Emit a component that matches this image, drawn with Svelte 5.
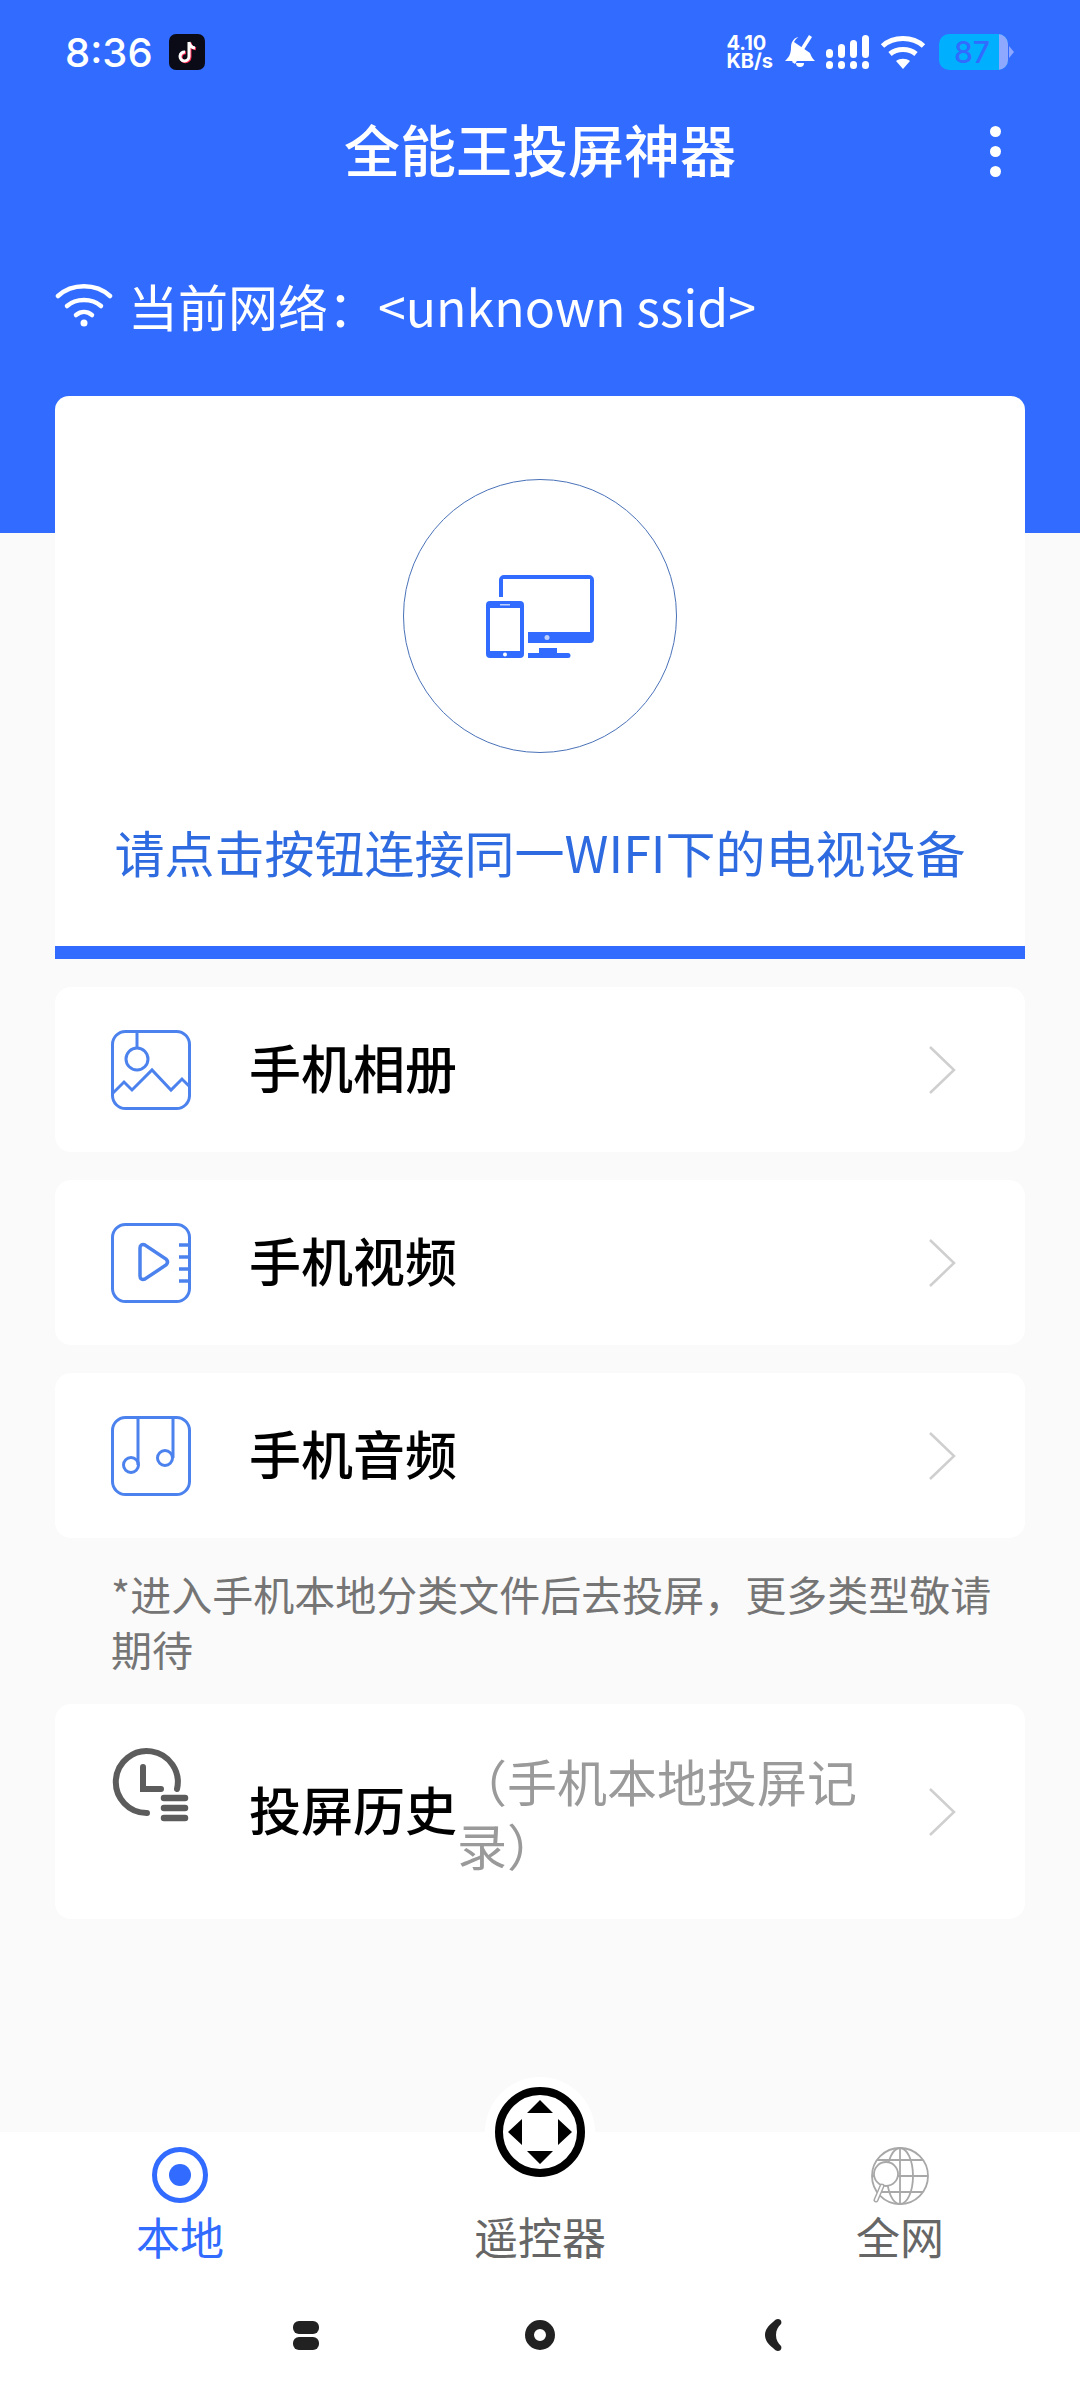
<script>
  const rows = [
    { id: 'photo', label: '手机相册' },
    { id: 'video', label: '手机视频' },
    { id: 'audio', label: '手机音频' }
  ]
</script>

{#snippet chevron()}
  <svg class="chevron" width="32" height="52" viewBox="0 0 32 52" fill="none" stroke="#cfcfcf" stroke-width="2.5"><path d="M4 3l24 23L4 49" /></svg>
{/snippet}

<div class="page">
  <header>
    <div class="status">
      <span class="time">8:36</span>
      <svg class="tiktok" width="36" height="36" viewBox="0 0 36 36">
        <rect width="36" height="36" rx="7" fill="#0b0b18" />
        <path d="M20 8v14.500a4.500 4.500 0 1 1-4-4.500M20 8c.5 3.500 2.600 5.500 6 6" fill="none" stroke="#fe2c55" stroke-width="3" transform="translate(1 .8)" />
        <path d="M20 8v14.500a4.500 4.500 0 1 1-4-4.500M20 8c.5 3.500 2.600 5.500 6 6" fill="none" stroke="#fff" stroke-width="3" />
      </svg>
      <div class="status-right">
        <span class="speed"><b>4.10</b><b>KB/s</b></span>
        <svg width="32" height="36" viewBox="0 0 32 36" fill="#fff">
          <path d="M16 3c-6 0-9 5-9 10 0 7-2 10-6 14h30c-3-3-4-5-5-8L10 8c1.500-3 3.500-5 6-5z" />
          <path d="M12 29h8a4 4 0 0 1-8 0z" />
          <path d="M25 1l3 2-17 27-3-2z" />
        </svg>
        <svg width="46" height="36" viewBox="0 0 46 36" fill="#fff">
          <rect x="1" y="15" width="7" height="9" rx="3.500" /><rect x="1" y="27" width="7" height="8" rx="3.500" />
          <rect x="13" y="10" width="7" height="14" rx="3.500" /><rect x="13" y="27" width="7" height="8" rx="3.500" />
          <rect x="25" y="6" width="7" height="18" rx="3.500" /><rect x="25" y="27" width="7" height="8" rx="3.500" />
          <rect x="37" y="1" width="7" height="23" rx="3.500" /><rect x="37" y="27" width="7" height="8" rx="3.500" />
        </svg>
        <svg width="46" height="36" viewBox="0 0 46 36" fill="none" stroke="#fff" stroke-width="5">
          <path d="M2.500 12c11-10 30-10 41 0" /><path d="M10 20c7-6 19-6 26 0" />
          <path d="M16 27l7 8 7-8c-4-3-10-3-14 0z" fill="#fff" stroke="none" />
        </svg>
        <span class="battery"><span class="level">87</span><span class="rest"></span></span>
        <span class="nub"></span>
      </div>
    </div>
    <div class="titlebar">
      <h1>全能王投屏神器</h1>
      <span class="more"><i></i><i></i><i></i></span>
    </div>
    <div class="network">
      <svg width="58" height="44" viewBox="0 0 58 44" fill="none" stroke="#fff" stroke-width="4.500" stroke-linecap="round">
        <path d="M3 13c14-13 38-13 52 0" /><path d="M12 23c9-8 25-8 34 0" /><path d="M21 32c5-4 11-4 16 0" />
        <circle cx="29" cy="40" r="3.500" fill="#fff" stroke="none" />
      </svg>
      <span>当前网络&#xFF1A;&lt;unknown ssid&gt;</span>
    </div>
  </header>

  <main>
    <section class="connect">
      <div class="circle">
        <svg width="108" height="83" viewBox="0 0 108 83">
          <g fill="#316bff">
            <path d="M13 22V5a5 5 0 0 1 5-5h85a5 5 0 0 1 5 5v59a4 4 0 0 1-4 4H42V57h62V4H17v18z" />
            <path d="M42 78h11v-5h18v5h11a2.500 2.500 0 0 1 0 5H42z" />
            <path fill-rule="evenodd" d="M4 26h30a4 4 0 0 1 4 4v49a4 4 0 0 1-4 4H4a4 4 0 0 1-4-4V30a4 4 0 0 1 4-4zM4 33v43h30V33z" />
          </g>
          <circle cx="61" cy="62.500" r="2.500" fill="#bcd0ff" /><circle cx="19" cy="79.500" r="2" fill="#fff" /><rect x="14" y="29" width="10" height="1.500" fill="#bcd0ff" />
        </svg>
      </div>
      <p>请点击按钮连接同一WIFI下的电视设备</p>
    </section>

    {#each rows as row}
      <div class="row">
        <svg class="icon" width="80" height="80" viewBox="0 0 80 80" fill="none" stroke="#4c82ee" stroke-width="3">
          <rect x="1.500" y="1.500" width="77" height="77" rx="13" />
          {#if row.id === 'photo'}
            <path d="M26 1.500V18" /><circle cx="26" cy="29" r="11" />
            <path d="M1 64l12-12 8 8 20-20 19 20 11-11 8 8" />
          {:else if row.id === 'video'}
            <path d="M29 25c0-3 2-4 5-3l21 14c2 2 2 4 0 6L34 56c-3 1-5 0-5-3z" stroke-width="3.500" />
            <path d="M68 22h11M68 34h11M68 46h11M68 58h11" stroke-width="3.500" />
          {:else}
            <path d="M27 1.500V49M62 1.500V42" /><circle cx="20" cy="49" r="7.500" /><circle cx="54" cy="42" r="7.500" />
          {/if}
        </svg>
        <span class="label">{row.label}</span>
        {@render chevron()}
      </div>
    {/each}

    <p class="note">*进入手机本地分类文件后去投屏&#xFF0C;更多类型敬请期待</p>

    <div class="row history">
      <svg class="icon clock" width="80" height="80" viewBox="0 0 80 80" fill="none" stroke="#5c5c5c" stroke-width="6" stroke-linecap="round">
        <path d="M36 67a31 31 0 1 1 30-24" /><path d="M32 21v22h18" />
        <path d="M53 52h21M53 62h21M53 72h21" stroke-width="6.500" />
      </svg>
      <span class="label">投屏历史</span>
      <span class="sub">&#xFF08;手机本地投屏记录&#xFF09;</span>
      {@render chevron()}
    </div>
  </main>

  <nav class="tabs">
    <div class="tab active">
      <svg width="56" height="56" viewBox="0 0 56 56"><circle cx="28" cy="28" r="25.500" fill="none" stroke="#316bff" stroke-width="5" /><circle cx="28" cy="28" r="11" fill="#316bff" /></svg>
      <span>本地</span>
    </div>
    <div class="tab">
      <span class="remote">
        <svg width="90" height="90" viewBox="0 0 90 90">
          <circle cx="45" cy="45" r="41" fill="#fff" stroke="#000" stroke-width="8" />
          <path d="M45 13l13 13H32zM45 77L32 64h26zM13 45l14-13v26zM77 45L63 58V32z" />
        </svg>
      </span>
      <span class="remote-space"></span>
      <span>遥控器</span>
    </div>
    <div class="tab">
      <svg class="globe" width="60" height="58" viewBox="0 0 60 58" fill="none" stroke="#a8a8a8" stroke-width="1.800">
        <circle cx="30" cy="29" r="28" /><ellipse cx="30" cy="29" rx="13" ry="28" /><path d="M30 1v56M7 13h46M2 29h56M7 45h46" />
        <circle cx="16" cy="27" r="12" fill="#fff" /><path d="M12 39L6 53" stroke-width="5" stroke-linecap="round" /><path d="M12 39L6 53" stroke="#fff" stroke-width="2" stroke-linecap="round" />
      </svg>
      <span>全网</span>
    </div>
  </nav>

  <div class="navbar">
    <span class="recents"><i></i><i></i></span>
    <span class="home"></span>
    <svg width="20" height="32" viewBox="0 0 20 32"><path d="M15 0c3 0 4 3 3 5-3 3-5 6-5 11s2 8 5 11c1 2 0 5-3 5-2 0-3-1-5-3-5-4-8-8-8-13S5 7 10 3c2-2 3-3 5-3z" fill="#222" /></svg>
  </div>
</div>

<style>
  :global(body) { background: #fafafa; }
  .page { width: 1080px; height: 2400px; display: flex; flex-direction: column; overflow: hidden; font-family: "Noto Sans CJK SC", "Noto Sans", sans-serif; }

  header { height: 533px; background: #316bff; color: #fff; flex: none; box-sizing: border-box; }
  .status { height: 104px; display: flex; align-items: center; padding: 0 66px 0 65px; }
  .time { font-family: Inter, sans-serif; font-size: 40px; font-weight: 500; }
  .tiktok { margin-left: 16px; }
  .status-right { margin-left: auto; display: flex; align-items: center; gap: 9px; }
  .speed { display: flex; flex-direction: column; gap: 1px; font-family: Inter, sans-serif; line-height: 17px; text-align: left; margin-right: 2px; }
  .speed b { font-size: 20px; font-weight: 700; }
  .battery { display: flex; width: 69px; height: 36px; border-radius: 10px; overflow: hidden; background: #00b0ff; margin-left: 4px; }
  .level { width: 60px; box-sizing: border-box; padding-left: 6px; text-align: center; color: #316bff; font-family: Inter, sans-serif; font-size: 30px; font-weight: 500; line-height: 36px; }
  .rest { flex: 1; background: #8fa8ff; }
  .nub { width: 0; height: 0; border: 6px solid transparent; border-left: 5px solid #8fa8ff; border-right: 0; margin-left: -8px; }

  .titlebar { height: 88px; display: flex; align-items: center; justify-content: center; position: relative; }
  h1 { margin: 0; font-size: 56px; font-weight: 500; line-height: 1; }
  .more { position: absolute; right: 79px; top: 22px; display: flex; flex-direction: column; gap: 9px; }
  .more i { width: 11px; height: 11px; border-radius: 50%; background: #fff; }

  .network { display: flex; align-items: center; gap: 15px; padding: 77px 0 0 55px; font-size: 50px; line-height: 72px; }

  main { flex: 1; padding: 0 55px; display: flex; flex-direction: column; }
  .connect { margin-top: -137px; height: 563px; flex: none; box-sizing: border-box; background: #fff; border-radius: 14px 14px 0 0; border-bottom: 13px solid #316bff; display: flex; flex-direction: column; align-items: center; padding-top: 83px; position: relative; }
  .circle { width: 274px; height: 274px; box-sizing: border-box; border: 1.500px solid #4a72b8; border-radius: 50%; display: flex; align-items: center; justify-content: center; }
  .connect p { margin: 62px 0 0; font-size: 50px; line-height: 72px; color: #2f6be0; white-space: nowrap; }

  .row { height: 165px; margin-top: 28px; flex: none; background: #fff; border-radius: 16px; display: flex; align-items: center; padding: 0 67px 0 56px; }
  .icon { flex: none; }
  .label { margin: 0 0 6px 58px; font-size: 52px; line-height: 72px; font-weight: 500; color: #000; flex: none; }
  .chevron { margin-left: auto; flex: none; }
  .note { margin: 28px 0 0; padding: 0 24px 0 56px; font-size: 41px; line-height: 55px; color: #757575; }
  .history { height: 215px; margin-top: 28px; }
  .clock { align-self: flex-start; margin-top: 42px; }
  .sub { width: 404px; font-size: 50px; line-height: 64px; color: #9a9a9a; }

  .tabs { display: grid; grid-template-columns: repeat(3, 1fr); height: 148px; background: #fff; flex: none; }
  .tab { display: flex; flex-direction: column; align-items: center; padding-top: 15px; font-size: 44px; line-height: 64px; color: #666; position: relative; }
  .tab svg { display: block; margin-bottom: 1px; }
  .tab .globe { margin-bottom: -1px; }
  .active { color: #316bff; }
  .remote { position: absolute; top: -55px; left: 50%; margin-left: -55px; width: 110px; height: 110px; background: #fff; border-radius: 50%; display: flex; align-items: center; justify-content: center; }
  .remote-space { height: 57px; }

  .navbar { height: 120px; background: #fff; flex: none; display: grid; grid-template-columns: 306px 234px 233px; justify-items: center; align-items: center; padding-bottom: 10px; box-sizing: border-box; }
  .navbar > :first-child { justify-self: end; margin-right: -13px; }
  .navbar > :nth-child(2) { justify-self: end; margin-right: -15px; }
  .navbar > :nth-child(3) { justify-self: end; margin-right: -10px; }
  .recents { display: flex; flex-direction: column; gap: 3px; }
  .recents i { display: block; width: 26px; height: 13px; border-radius: 6px; background: #222; }
  .home { width: 30px; height: 30px; box-sizing: border-box; border: 9px solid #222; border-radius: 50%; }
</style>
